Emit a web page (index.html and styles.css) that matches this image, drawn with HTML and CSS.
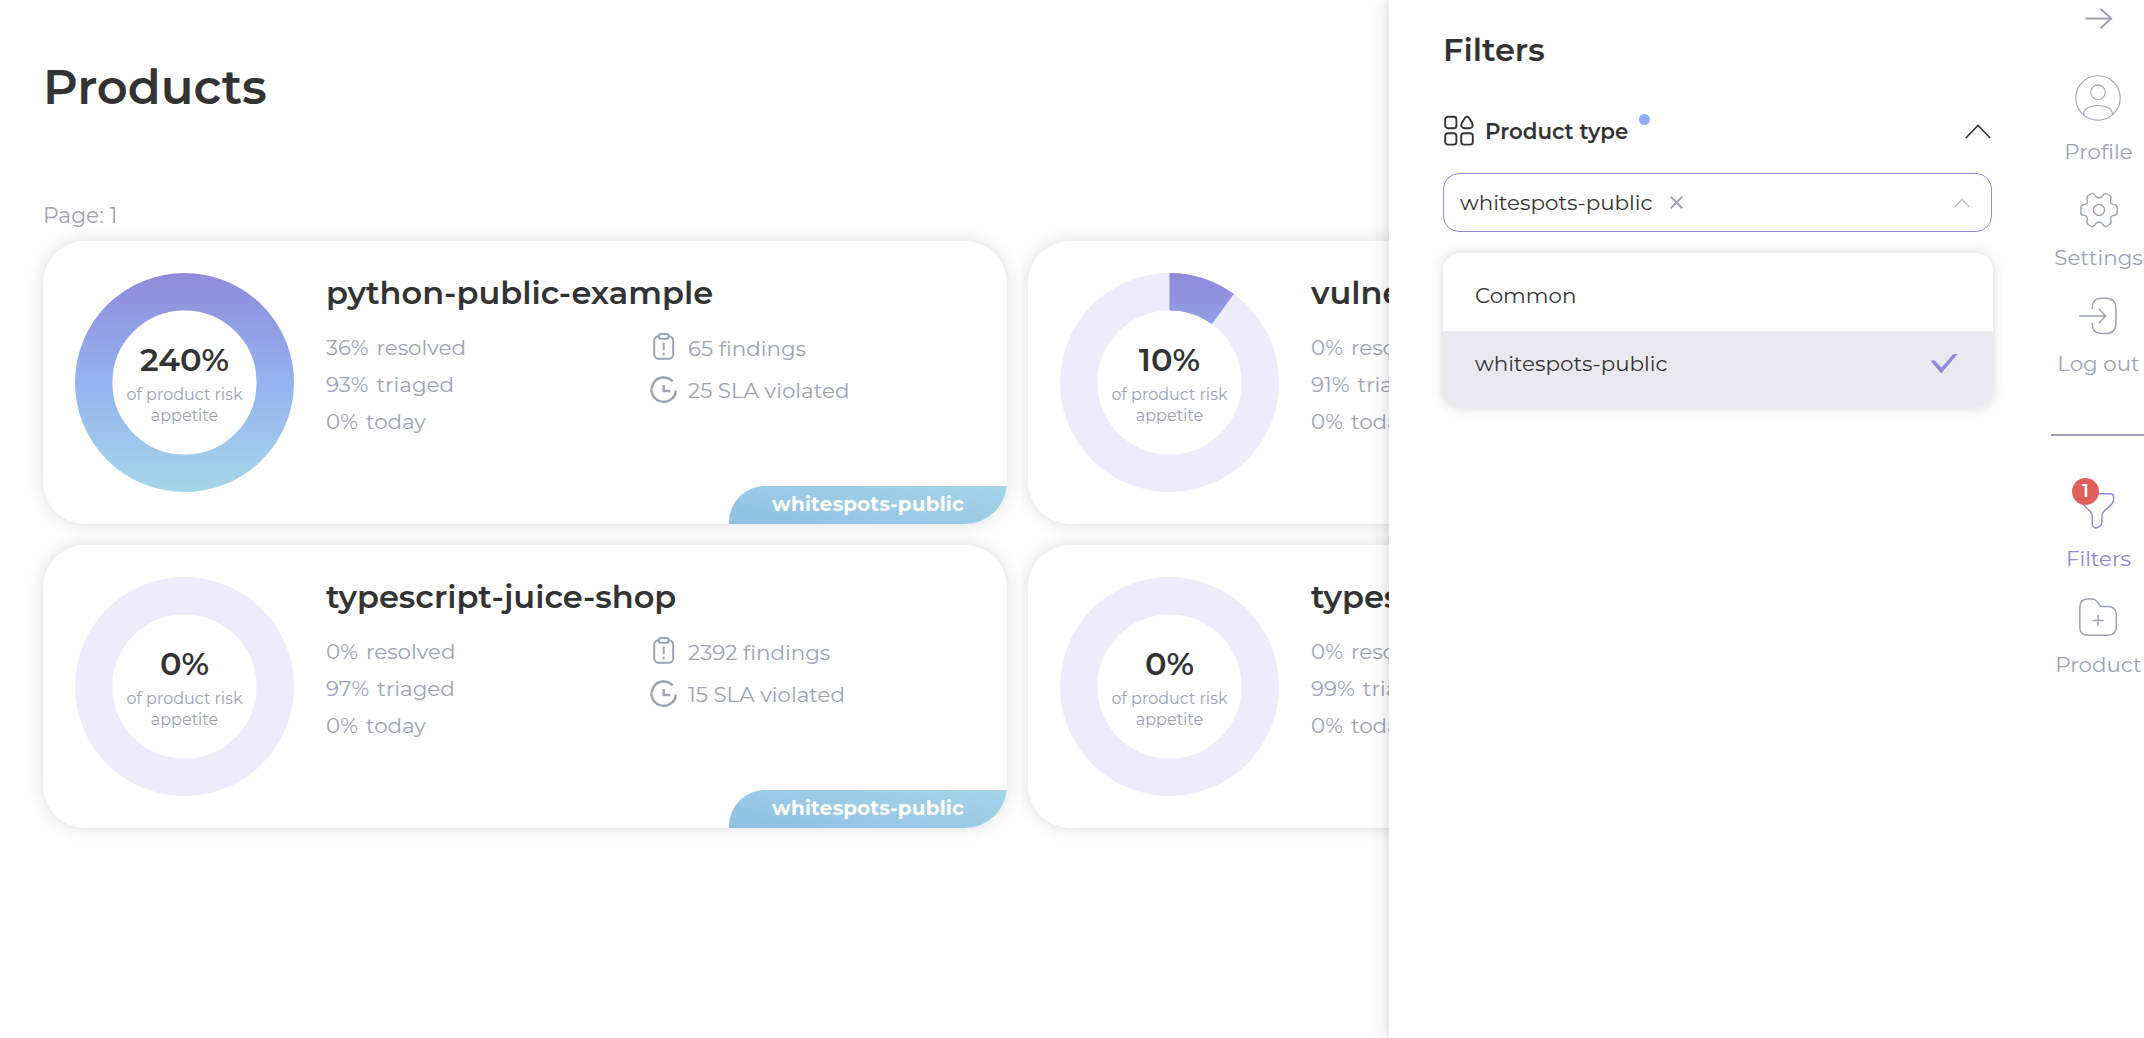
FILE: index.html
```
<!DOCTYPE html>
<html lang="en">
<head>
<meta charset="utf-8">
<title>Products</title>
<link rel="stylesheet" href="styles.css">
</head>
<body>
<svg class="defs" aria-hidden="true">
  <defs>
    <linearGradient id="ring" gradientUnits="userSpaceOnUse" x1="0" y1="0" x2="0" y2="219">
      <stop offset="0" stop-color="#8f8adb"/><stop offset=".5" stop-color="#95b3ef"/><stop offset="1" stop-color="#a5d7e8"/>
    </linearGradient>
    <symbol id="clipboard" viewBox="0 0 28 28">
      <rect x="4.2" y="3.2" width="19" height="22.6" rx="4.5"/>
      <rect class="cover" x="8.7" y="1.1" width="10" height="4.6" rx="2.3"/>
      <path d="M13.7 9.5v7.6M13.7 19.8v2.4"/>
    </symbol>
    <symbol id="clock" viewBox="0 0 28 28">
      <path d="M22.7 5.4A12.2 12.2 0 1 0 25.9 14.6M13.7 9v6h6.7"/>
    </symbol>
  </defs>
</svg>

<main class="page">
  <h1>Products</h1>
  <p class="pager">Page: 1</p>
  <section class="cards">
    <article class="card">
      <div class="donut">
        <svg width="219" height="219" viewBox="0 0 219 219"><circle cx="109.5" cy="109.5" r="90.8" stroke="url(#ring)"/></svg>
        <div class="donut-label"><b>240%</b><span>of product risk<br>appetite</span></div>
      </div>
      <div class="info">
        <h2>python-public-example</h2>
        <div class="stats">
          <ul class="rates"><li><span>36%</span><span>resolved</span></li><li><span>93%</span><span>triaged</span></li><li><span>0%</span><span>today</span></li></ul>
          <ul class="counts"><li><svg class="icon"><use href="#clipboard"/></svg>65 findings</li><li><svg class="icon clock"><use href="#clock"/></svg>25 SLA violated</li></ul>
        </div>
      </div>
      <span class="tag">whitespots-public</span>
    </article>

    <article class="card">
      <div class="donut">
        <svg width="219" height="219" viewBox="0 0 219 219"><circle class="track" cx="109.5" cy="109.5" r="90.8"/><circle cx="109.5" cy="109.5" r="90.8" stroke="url(#ring)" pathLength="100" stroke-dasharray="10 90" stroke-dashoffset="25"/></svg>
        <div class="donut-label"><b>10%</b><span>of product risk<br>appetite</span></div>
      </div>
      <div class="info">
        <h2>vulnera</h2>
        <div class="stats">
          <ul class="rates"><li><span>0%</span><span>resolved</span></li><li><span>91%</span><span>triaged</span></li><li><span>0%</span><span>today</span></li></ul>
        </div>
      </div>
    </article>

    <article class="card">
      <div class="donut">
        <svg width="219" height="219" viewBox="0 0 219 219"><circle class="track" cx="109.5" cy="109.5" r="90.8"/></svg>
        <div class="donut-label"><b>0%</b><span>of product risk<br>appetite</span></div>
      </div>
      <div class="info">
        <h2>typescript-juice-shop</h2>
        <div class="stats">
          <ul class="rates"><li><span>0%</span><span>resolved</span></li><li><span>97%</span><span>triaged</span></li><li><span>0%</span><span>today</span></li></ul>
          <ul class="counts"><li><svg class="icon"><use href="#clipboard"/></svg>2392 findings</li><li><svg class="icon clock"><use href="#clock"/></svg>15 SLA violated</li></ul>
        </div>
      </div>
      <span class="tag">whitespots-public</span>
    </article>

    <article class="card">
      <div class="donut">
        <svg width="219" height="219" viewBox="0 0 219 219"><circle class="track" cx="109.5" cy="109.5" r="90.8"/></svg>
        <div class="donut-label"><b>0%</b><span>of product risk<br>appetite</span></div>
      </div>
      <div class="info">
        <h2>typescript</h2>
        <div class="stats">
          <ul class="rates"><li><span>0%</span><span>resolved</span></li><li><span>99%</span><span>triaged</span></li><li><span>0%</span><span>today</span></li></ul>
        </div>
      </div>
    </article>
  </section>
</main>

<aside class="drawer">
  <div class="filters">
    <h3>Filters</h3>
    <div class="group">
      <svg width="32" height="32" viewBox="0 0 32 32" fill="none" stroke="#333" stroke-width="1.9" stroke-linejoin="round">
        <rect x="2.2" y="1.8" width="11.2" height="11.4" rx="2.8"/><rect x="2.2" y="18.2" width="11.2" height="11.4" rx="2.8"/><rect x="18.2" y="18.2" width="11.6" height="11.4" rx="2.8"/>
        <path d="M21.6 3.4c1.4-2.2 3.4-2.2 4.8 0l2.6 4.4c1.6 3 .3 5.4-2.6 5.4h-4.8c-2.9 0-4.2-2.4-2.6-5.4z"/>
      </svg>
      <span class="group-name">Product type</span>
      <i class="dot"></i>
      <svg class="toggle" width="26" height="15" viewBox="0 0 26 15" fill="none" stroke="#333" stroke-width="1.6"><path d="M.8 14 13 1.4 25.2 14"/></svg>
    </div>
    <div class="select">
      <span>whitespots-public</span>
      <svg width="13" height="13" viewBox="0 0 12 12" stroke="#9da3b2" stroke-width="1.7"><path d="m.7.7 10.6 10.6M11.3.7.7 11.3"/></svg>
      <svg class="caret" width="16" height="10" viewBox="0 0 16 10" fill="none" stroke="#b4b9c5" stroke-width="1.2"><path d="M.8 9 8 1.4 15.2 9"/></svg>
    </div>
    <ul class="options">
      <li>Common</li>
      <li class="selected">whitespots-public
        <svg width="28" height="21" viewBox="0 0 28 21" fill="#8f87dd"><path d="M.5 7.500H4.800L11.400 14.800 23.400 1H27.600L11.200 20.400z"/></svg>
      </li>
    </ul>
  </div>

  <nav class="rail">
    <svg class="arrow" width="28" height="21" viewBox="0 0 28 21" stroke-width="1.9"><path d="M1 10.5h25.3M16 1.3l10.300 9.200L16 19.700"/></svg>
    <a class="item profile">
      <svg width="46" height="46" viewBox="0 0 46 46" stroke-width="1.1"><circle cx="23" cy="23" r="22.2"/><circle cx="23" cy="17.2" r="7.3"/><path d="M8.6 39.6v-.8c0-5.100 6.400-8.300 14.400-8.300s14.400 3.200 14.400 8.300v.8"/></svg>
      <span>Profile</span>
    </a>
    <a class="item">
      <svg width="38" height="38" viewBox="0 0 38 38" stroke-width="1.4"><circle cx="19" cy="19" r="5.500"/><path d="M.8 16.600c0-2 1-2.800 3-3 2.500-.2 4.200-1.600 3.500-4.300-.8-2.500-.8-3.600.9-4.800l2.500-1.500c1.700-1 2.900-.6 4.100 1.200 1.600 2.500 2.300 2.800 4.200 2.800s2.600-.3 4.200-2.800c1.200-1.800 2.400-2.200 4.100-1.200l2.500 1.500c1.700 1.200 1.700 2.300.9 4.800-.7 2.700 1 4.100 3.500 4.300 2 .2 3 1 3 3v4.800c0 2-1 2.800-3 3-2.500.2-4.200 1.600-3.500 4.300.8 2.500.8 3.600-.9 4.800l-2.500 1.500c-1.700 1-2.900.6-4.100-1.200-1.600-2.500-2.300-2.800-4.200-2.800s-2.600.3-4.200 2.800c-1.200 1.800-2.400 2.200-4.100 1.200l-2.500-1.500c-1.700-1.200-1.700-2.300-.9-4.800.7-2.700-1-4.100-3.500-4.300-2-.2-3-1-3-3z"/></svg>
      <span>Settings</span>
    </a>
    <a class="item">
      <svg width="38" height="38" viewBox="0 0 38 38" stroke-width="1.5"><path d="M13.300 11.500V11c0-6.300 3-9.700 9.200-9.700h3.900c7 0 10.600 3.600 10.600 10.600v14c0 7-3.600 10.600-10.600 10.600h-3.900c-6.200 0-9.200-3.400-9.200-9.700v-.5M.7 19h26M20 12l6.700 7L20 26"/></svg>
      <span>Log out</span>
    </a>
    <hr>
    <a class="item active">
      <svg width="38" height="38" viewBox="0 0 38 38" stroke-width="1.4"><path d="M5.500 1.700h25.700c2.200 0 3.400 1.200 3.400 3.400v2.800c0 1.900-1 3.500-2.700 5.200l-6.600 5.800c-1.600 1.500-2.400 3-2.400 5v6.600c0 1.500-1 3.200-2.200 3.900l-1.800 1c-2.600 1.400-5.600-.2-5.600-3.100v-8.100c0-1.800-.9-3.500-2.400-5.100l-5.700-5.700c-1.700-1.700-3-3.500-3-5.200V5.100c0-2.200 1.200-3.400 3.300-3.400z"/></svg>
      <em class="badge">1</em>
      <span>Filters</span>
    </a>
    <a class="item">
      <svg width="38" height="38" viewBox="0 0 38 38" stroke-width="1.5"><path d="M.8 9.500C.8 4 3.300 1 8.800 1h4.600c2.300 0 3.300.8 4.500 2.400l2.900 3.900c.7.900 1.200 1.200 2.400 1.200h5.600c6 0 8.500 2.500 8.500 8.500v11.800c0 5.800-2.600 8.400-8.400 8.400H9.200C3.400 37.200.8 34.600.8 28.800zM19 17.400v10.200M13.900 22.500h10.200"/></svg>
      <span>Product</span>
    </a>
  </nav>
</aside>
</body>
</html>
```
FILE: styles.css
```
* { box-sizing: border-box; margin: 0; padding: 0; }
body {
  width: 2144px;
  height: 1038px;
  overflow: hidden;
  position: relative;
  background: #fff;
  color: #333;
  font: 400 21.4px/26px Montserrat, Inter, sans-serif;
}
ul { list-style: none; }
svg { display: block; flex: none; }
.defs { position: absolute; width: 0; height: 0; }

.page { padding: 57px 0 0 43px; }
h1 { font-size: 48px; line-height: 60px; font-weight: 600; }
.pager { margin-top: 85px; font-size: 21.8px; color: #9da3b2; }
.cards {
  display: grid;
  grid-template-columns: 964px 964px;
  gap: 21px;
  margin-top: 13px;
}
.card {
  position: relative;
  display: flex;
  gap: 32px;
  height: 283px;
  padding: 32px;
  border-radius: 42px;
  overflow: hidden;
  background: #fff;
  box-shadow: 0 0 16px rgba(0, 0, 0, .15);
}
.donut { display: grid; place-items: center; width: 219px; height: 219px; flex: none; }
.donut > * { grid-area: 1 / 1; }
.donut circle { fill: none; stroke-width: 37.4; }
.donut .track { stroke: #edebfc; }
.donut-label { display: flex; flex-direction: column; text-align: center; padding-top: 1px; }
.donut-label b { font-size: 32px; line-height: 40px; font-weight: 600; margin-bottom: 4px; }
.donut-label span { font-size: 16px; line-height: 21px; color: #9da3b2; }
.info { flex: 1; }
h2 { font-size: 32px; line-height: 40px; font-weight: 600; white-space: nowrap; }
.stats { display: flex; color: #9da3b2; margin-top: 16px; }
.rates { width: 323px; }
.rates li { display: flex; gap: 8px; height: 37px; line-height: 37px; }
.counts { margin-top: -2px; }
.counts li { display: flex; align-items: center; gap: 10px; height: 42px; margin-left: 1px; }
.icon { width: 28px; height: 28px; fill: none; stroke: #9da3b2; stroke-width: 2; margin-top: -2px; }
.icon.clock { stroke-width: 2.4; margin-top: 0; }
.cover { fill: #fff; }
.tag {
  position: absolute;
  right: 0;
  bottom: 0;
  width: 278px;
  height: 38px;
  border-radius: 36px 0 0 0;
  background: linear-gradient(10deg, #90c0e3, #a5d5e8);
  color: #fff;
  font-size: 20px;
  line-height: 36px;
  font-weight: 700;
  letter-spacing: .15px;
  text-align: center;
}

.drawer {
  position: absolute;
  top: 0;
  right: 0;
  width: 755px;
  height: 1038px;
  display: flex;
  background: #fff;
  box-shadow: 0 0 16px rgba(0, 0, 0, .2);
}
.filters { width: 662px; flex: none; padding: 30px 58px 0 54px; }
h3 { font-size: 32px; line-height: 40px; font-weight: 600; }
.group { display: flex; align-items: center; width: 548px; height: 32px; margin-top: 45px; }
.group-name { font-weight: 600; margin-left: 10px; }
.dot { width: 11px; height: 11px; border-radius: 50%; background: #8caef9; margin: -23px 0 0 11px; }
.toggle { margin-left: auto; }
.select {
  display: flex;
  align-items: center;
  height: 59px;
  width: 549px;
  margin-top: 26px;
  padding: 0 21px 0 16px;
  border: 1px solid #8f87dd;
  border-radius: 16px;
}
.select span { margin: -2px 17px 0 0; }
.caret { margin-left: auto; }
.options {
  width: 550px;
  margin-top: 21px;
  padding-top: 9px;
  border-radius: 17px;
  overflow: hidden;
  box-shadow: 0 0 12px rgba(0, 0, 0, .17);
}
.options li { display: flex; align-items: center; justify-content: space-between; height: 69px; padding: 0 35px 4px 32px; }
.options .selected { height: 77px; padding-bottom: 13px; background: #eae9f0; }

.rail { width: 95px; flex: none; display: flex; flex-direction: column; align-items: center; padding-top: 8px; }
.rail svg { fill: none; stroke: #9da3b2; stroke-linecap: round; stroke-linejoin: round; }
.item { position: relative; display: flex; flex-direction: column; align-items: center; gap: 15px; color: #9da3b2; margin-bottom: 27px; white-space: nowrap; }
.item.profile { gap: 17px; margin-top: 46px; margin-bottom: 27px; }
.item.active { color: #8f87dd; }
.rail .active svg { stroke: #8f87dd; }
.rail hr { width: 95px; height: 2px; border: 0; background: #9da3b2; margin: 31px 0 56px; }
.badge {
  position: absolute;
  left: 19px;
  margin-left: 0;
  top: -14px;
  width: 27px;
  height: 27px;
  border-radius: 50%;
  transform: translateX(-13px);
  background: #e15f5b;
  color: #fff;
  font-size: 18px;
  font-style: normal;
  font-weight: 600;
  text-align: center;
}
```
